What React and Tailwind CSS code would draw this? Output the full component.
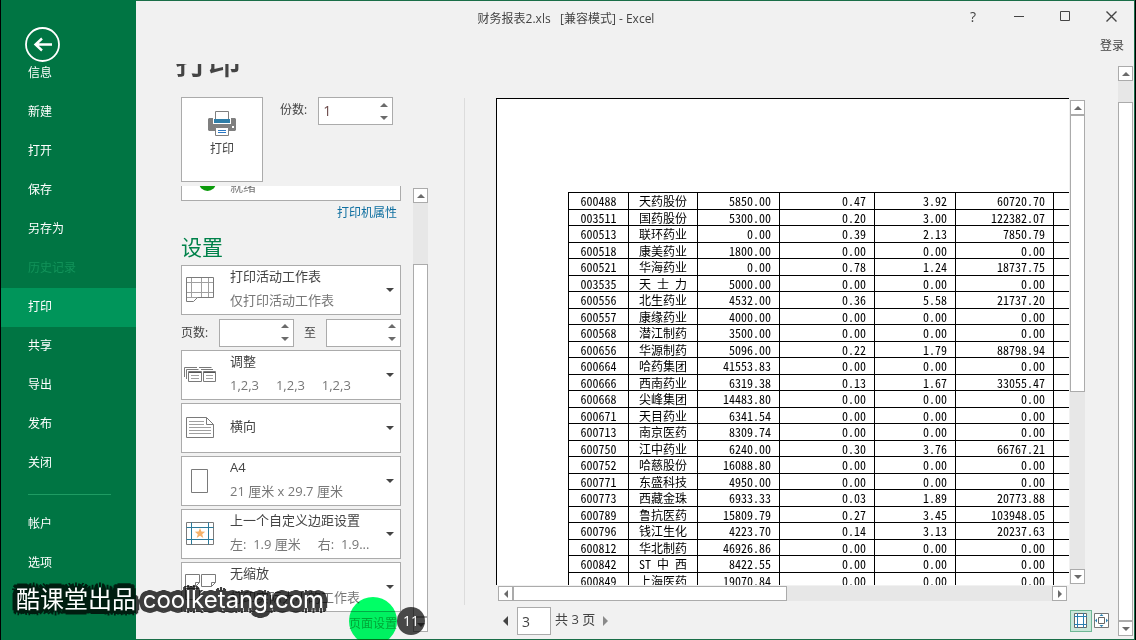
import React, { useState } from "react";
import clsx from "clsx";

const navItems = [
  { label: "信息" },
  { label: "新建" },
  { label: "打开" },
  { label: "保存" },
  { label: "另存为" },
  { label: "历史记录", disabled: true },
  { label: "打印" },
  { label: "共享" },
  { label: "导出" },
  { label: "发布" },
  { label: "关闭" }
];

const footerItems = [{ label: "帐户" }, { label: "选项" }];

const stocks = [
  ["600488", "天药股份", "5850.00", "0.47", "3.92", "60720.70"],
  ["003511", "国药股份", "5300.00", "0.20", "3.00", "122382.07"],
  ["600513", "联环药业", "0.00", "0.39", "2.13", "7850.79"],
  ["600518", "康美药业", "1800.00", "0.00", "0.00", "0.00"],
  ["600521", "华海药业", "0.00", "0.78", "1.24", "18737.75"],
  ["003535", "天 士 力", "5000.00", "0.00", "0.00", "0.00"],
  ["600556", "北生药业", "4532.00", "0.36", "5.58", "21737.20"],
  ["600557", "康缘药业", "4000.00", "0.00", "0.00", "0.00"],
  ["600568", "潜江制药", "3500.00", "0.00", "0.00", "0.00"],
  ["600656", "华源制药", "5096.00", "0.22", "1.79", "88798.94"],
  ["600664", "哈药集团", "41553.83", "0.00", "0.00", "0.00"],
  ["600666", "西南药业", "6319.38", "0.13", "1.67", "33055.47"],
  ["600668", "尖峰集团", "14483.80", "0.00", "0.00", "0.00"],
  ["600671", "天目药业", "6341.54", "0.00", "0.00", "0.00"],
  ["600713", "南京医药", "8309.74", "0.00", "0.00", "0.00"],
  ["600750", "江中药业", "6240.00", "0.30", "3.76", "66767.21"],
  ["600752", "哈慈股份", "16088.80", "0.00", "0.00", "0.00"],
  ["600771", "东盛科技", "4950.00", "0.00", "0.00", "0.00"],
  ["600773", "西藏金珠", "6933.33", "0.03", "1.89", "20773.88"],
  ["600789", "鲁抗医药", "15809.79", "0.27", "3.45", "103948.05"],
  ["600796", "钱江生化", "4223.70", "0.14", "3.13", "20237.63"],
  ["600812", "华北制药", "46926.86", "0.00", "0.00", "0.00"],
  ["600842", "ST 中 西", "8422.55", "0.00", "0.00", "0.00"],
  ["600849", "上海医药", "19070.84", "0.00", "0.00", "0.00"]
];

const arrowPoints = {
  up: "0,4 4,0 8,4",
  down: "0,0 8,0 4,4",
  left: "4,0 4,8 0,4",
  right: "0,0 4,4 0,8"
};

function Arrow({ dir, size, className = "fill-[#6b6b6b]" }) {
  const flat = dir === "up" || dir === "down";
  return (
    <svg
      viewBox={flat ? "0 0 8 4" : "0 0 4 8"}
      className={clsx("block shrink-0", size || (flat ? "w-2 h-1" : "w-1 h-2"), className)}
      aria-hidden="true"
    >
      <polygon points={arrowPoints[dir]} />
    </svg>
  );
}

function ScrollButton({ dir, label }) {
  return (
    <button
      type="button"
      aria-label={label}
      className="w-[15px] h-[15px] shrink-0 flex items-center justify-center bg-white border border-[#ababab]"
    >
      <Arrow dir={dir} />
    </button>
  );
}

// before / after are the empty track parts on each side of the thumb
function VScroll({ before, thumb, after }) {
  return (
    <div className="w-[15px] h-full flex flex-col bg-[#e7e7e7]">
      <ScrollButton dir="up" label="向上滚动" />
      <div className={before} />
      <div className={clsx("bg-white border border-[#ababab]", thumb)} />
      <div className={after} />
      <ScrollButton dir="down" label="向下滚动" />
    </div>
  );
}

function Spinner({ id, value = "" }) {
  const [text, setText] = useState(value);
  const step = (n) => setText(String(Math.max(1, (parseInt(text, 10) || 0) + n)));

  return (
    <div className="w-[75px] h-7 flex bg-white border border-[#ababab]">
      <input
        id={id}
        type="text"
        value={text}
        onChange={(e) => setText(e.target.value)}
        className="min-w-0 flex-1 pl-1 text-sm text-[#6b4a4a] bg-transparent focus:outline-none"
      />
      <div className="w-4 flex flex-col">
        <button type="button" aria-label="增加" onClick={() => step(1)} className="flex-1 flex items-center justify-center">
          <Arrow dir="up" />
        </button>
        <button type="button" aria-label="减少" onClick={() => step(-1)} className="flex-1 flex items-center justify-center">
          <Arrow dir="down" />
        </button>
      </div>
    </div>
  );
}

function Icon({ children }) {
  return (
    <svg width="36" height="28" viewBox="0 0 36 28" fill="none" stroke="#7a7a7a" className="shrink-0" aria-hidden="true">
      {children}
    </svg>
  );
}

const SheetIcon = () => (
  <Icon>
    <path stroke="#a0a0a0" d="M7.5 1.5v20M17.5 1.5v20M24.5 1.5v20M2.5 6.5h27M2.5 16.5h27M2.5 21.5h11" />
    <path d="M2.5 1.5h27v20h-16l-4 4h-7z" />
  </Icon>
);

const CollateIcon = () => (
  <Icon>
    <path d="M0.5 16V6.5h12.5M2.5 18V8.5h12M15 6.5h12.5M17 8.5h12" />
    <path d="M4.5 10.5h13v10h-13zM19.5 10.5h12v10h-12z" />
    <path stroke="#555" d="M5 11.5h12M20 11.5h11" />
    <path stroke="#a0a0a0" d="M7 14.5h8M7 17.5h8M22 14.5h7M22 17.5h7" />
  </Icon>
);

const LandscapeIcon = () => (
  <Icon>
    <path d="M2.5 3.5h20l7 7v13h-27zM22.5 3.5v7h7" />
    <path stroke="#a0a0a0" d="M5 7.5h15M5 10.5h15M5 13.5h22M5 16.5h22M5 19.5h22" />
  </Icon>
);

const PaperIcon = () => (
  <Icon>
    <path d="M7.5 2.5h16v23h-16z" />
  </Icon>
);

const MarginIcon = () => (
  <Icon>
    <path d="M2.5 2.5h27v22h-27z" />
    <path stroke="#2b7a9b" d="M7.5 2.5v22M24.5 2.5v22M2.5 7.5h27M2.5 19.5h27" />
    <path
      stroke="none"
      fill="#f6b26b"
      d="M16 8l1.4 3.6 3.8.2-3 2.4 1.1 3.8-3.3-2.2-3.3 2.2 1.1-3.8-3-2.4 3.8-.2z"
    />
  </Icon>
);

const ScaleIcon = () => (
  <Icon>
    <path d="M1.5 1.5h14v8l-4 4h-10zM11.5 13.5v-4h4" />
    <path d="M17.5 1.5h14v8l-4 4h-10zM27.5 13.5v-4h4" />
    <path d="M1.5 15.5h14v11h-14z" />
  </Icon>
);

const PrinterIcon = () => (
  <svg width="28" height="26" viewBox="0 0 28 26" aria-hidden="true" className="block">
    <path fill="#7f7f7f" d="M1 7h4v6h18V7h4l1 1v11l-1 1H1l-1-1V8z" />
    <path fill="#fff" stroke="#7f7f7f" d="M7.5 0.5h13v9h-13z" />
    <path fill="#2f7ea8" d="M6 8h16v4H6z" />
    <path fill="#fff" stroke="#7f7f7f" d="M7.5 16.5h13v8h-13z" />
    <path stroke="#2b78c4" d="M10 19.5h8M10 21.5h8" />
    <path fill="#fff" d="M24 15h2v2h-2z" />
  </svg>
);

const settings = [
  { title: "调整", detail: "1,2,3     1,2,3     1,2,3", icon: CollateIcon },
  { title: "横向", icon: LandscapeIcon },
  { title: "A4", detail: "21 厘米 x 29.7 厘米", icon: PaperIcon },
  { title: "上一个自定义边距设置", detail: "左:  1.9 厘米     右:  1.9...", icon: MarginIcon },
  { title: "无缩放", detail: "打印实际大小的工作表", icon: ScaleIcon }
];

function OptionBox({ title, detail, icon: OptionIcon }) {
  return (
    <button
      type="button"
      aria-haspopup="listbox"
      className="w-full h-[50px] flex items-center pl-0.5 pr-1.5 bg-white border border-[#ababab] text-left"
    >
      <OptionIcon />
      <span className="flex-1 min-w-0 pl-2.5 pb-1 text-[13px] leading-6 whitespace-pre">
        <span className="block text-[#444]">{title}</span>
        {detail && <span className="block text-[#777]">{detail}</span>}
      </span>
      <Arrow dir="down" className="fill-[#444]" />
    </button>
  );
}

function Sidebar() {
  const [active, setActive] = useState("打印");

  const renderItem = (item) => (
    <li key={item.label}>
      <button
        type="button"
        disabled={item.disabled}
        onClick={() => setActive(item.label)}
        className={clsx(
          "w-full h-[39px] pl-[27px] pb-0.5 text-left text-xs",
          item.disabled ? "text-[#12935a]" : "text-white",
          active === item.label && "bg-[#00955a]"
        )}
      >
        {item.label}
      </button>
    </li>
  );

  return (
    <nav className="w-[135px] shrink-0 pt-[27px] bg-[#007543]">
      <button type="button" aria-label="返回" className="relative z-10 block ml-6">
        <svg width="35" height="35" viewBox="0 0 35 35" fill="none" stroke="#fff" aria-hidden="true" className="block">
          <circle cx="17.5" cy="17.5" r="16.5" strokeWidth="1.8" />
          <path strokeWidth="2.4" d="M27 17.5H11M17 11.5l-6.5 6 6.5 6" />
        </svg>
      </button>
      <ul className="-mt-2">{navItems.map(renderItem)}</ul>
      <hr className="mt-[11px] mb-2.5 ml-[27px] mr-[25px] border-[#1f9c63]" />
      <ul>{footerItems.map(renderItem)}</ul>
    </nav>
  );
}

function TitleBar() {
  return (
    <header className="text-xs text-[#444]">
      <div className="h-9 flex">
        <h1 className="flex-1 pl-[46px] text-center leading-9 whitespace-pre">财务报表2.xls   [兼容模式] - Excel</h1>
        <div className="h-[31px] flex">
          <button type="button" aria-label="帮助" className="w-[46px] text-sm">?</button>
          <button type="button" aria-label="最小化" className="w-[46px] flex items-center justify-center">
            <svg width="11" height="11" stroke="#444" aria-hidden="true"><path d="M0 5.5h10" /></svg>
          </button>
          <button type="button" aria-label="最大化" className="w-[46px] flex items-center justify-center">
            <svg width="11" height="11" stroke="#444" fill="none" aria-hidden="true"><path d="M0.5 0.5h9v9h-9z" /></svg>
          </button>
          <button type="button" aria-label="关闭窗口" className="w-[46px] flex items-center justify-center">
            <svg width="11" height="11" stroke="#444" strokeWidth="1.4" aria-hidden="true"><path d="M0.5 0.5l10 10M10.5 0.5l-10 10" /></svg>
          </button>
        </div>
      </div>
      <div className="h-[27px] pr-2.5 flex items-start justify-end">
        <a href="#signin" className="leading-[18px]">登录</a>
      </div>
    </header>
  );
}

function PrintPanel() {
  return (
    <section className="w-[328px] shrink-0 flex flex-col text-[13px] text-[#444]">
      {/* page heading, scrolled partly out of view */}
      <div className="h-[33px] pl-[39px] overflow-hidden">
        <h2 className="-mt-5 text-[33px] leading-9 font-medium">打印</h2>
      </div>

      <div className="pl-[45px] flex items-start">
        <button type="button" className="w-[82px] h-[85px] flex flex-col items-center justify-start pt-[13px] bg-white border border-[#ababab] text-xs">
          <PrinterIcon />
          <span className="pt-1">打印</span>
        </button>
        <label htmlFor="copies" className="pl-[17px] pr-[11px] text-xs leading-[26px]">份数:</label>
        <Spinner id="copies" value="1" />
      </div>

      <div className="flex-1 min-h-0 mt-1 mb-[7px] pl-[45px] flex gap-3">
        <div className="w-[220px] h-full shrink-0 overflow-hidden">
          <div className="h-[15px] flex items-end pl-[17px] border border-t-0 border-[#ababab] bg-white overflow-hidden">
            <span className="w-[17px] h-[17px] mb-[9px] rounded-full bg-[#0b9a0b]" />
            <span className="pl-3.5 mb-1.5 leading-4 text-[#777]">就绪</span>
          </div>
          <p className="pr-1 pt-0.5 text-right text-xs leading-5">
            <a href="#printer" className="text-[#0f6fa0]">打印机属性</a>
          </p>
          <h3 className="pt-2 pb-0.5 text-[21px] leading-8 text-[#00824a]">设置</h3>
          <OptionBox title="打印活动工作表" detail="仅打印活动工作表" icon={SheetIcon} />
          <div className="h-[35px] flex items-center text-xs">
            <label htmlFor="from" className="w-[38px]">页数:</label>
            <Spinner id="from" />
            <label htmlFor="to" className="flex-1 text-center">至</label>
            <Spinner id="to" />
          </div>
          <div className="flex flex-col gap-[3px]">
            {settings.map((s) => (
              <OptionBox key={s.title} {...s} />
            ))}
          </div>
          <p className="pr-1 pt-0.5 text-right text-xs leading-5">
            <a href="#setup" className="text-[#5aa585]">页面设置</a>
          </p>
        </div>
        <div className="pt-0.5">
          <VScroll before="h-[61px]" thumb="flex-1" after="h-0" />
        </div>
      </div>
    </section>
  );
}

function PreviewTable() {
  return (
    <table className="w-[585px] table-fixed border-collapse text-xs leading-[14px] text-black font-['Noto_Sans_CJK_SC',monospace] [font-feature-settings:'hwid']">
      <colgroup>
        <col className="w-[60px]" />
        <col className="w-[69px]" />
        <col className="w-[82px]" />
        <col className="w-[95px]" />
        <col className="w-[81px]" />
        <col className="w-[98px]" />
        <col />
      </colgroup>
      <tbody>
        {stocks.map((row) => (
          <tr key={row[0]} className="odd:h-[17px] even:h-4">
            {row.map((cell, i) => (
              <td
                key={i}
                className={clsx(
                  "py-0 border border-black whitespace-pre",
                  i < 2 ? "px-0 text-center" : "pl-0 pr-2 text-right"
                )}
              >
                {cell}
              </td>
            ))}
            <td className="p-0 border border-black" />
          </tr>
        ))}
      </tbody>
    </table>
  );
}

function PreviewFooter() {
  const [page, setPage] = useState("3");

  return (
    <div className="h-7 mt-1.5 mb-1 pl-[7px] flex items-center text-[13px] text-[#444]">
      <button type="button" aria-label="上一页">
        <Arrow dir="left" size="w-[5px] h-2.5" className="fill-[#444]" />
      </button>
      <input
        type="text"
        aria-label="当前页"
        value={page}
        onChange={(e) => setPage(e.target.value)}
        className="w-[34px] h-7 ml-[9px] pl-1 bg-white border border-[#ababab] text-sm focus:outline-none"
      />
      <span className="px-1 pb-0.5">共 3 页</span>
      <button type="button" aria-label="下一页" className="pl-1">
        <Arrow dir="right" size="w-[5px] h-2.5" className="fill-[#8a8a8a]" />
      </button>
      <div className="ml-auto flex items-center gap-0.5">
        <button type="button" aria-label="显示边距" className="w-[22px] h-[22px] flex items-center justify-center bg-[#c9e6d9] border border-[#6fb795]">
          <svg width="16" height="16" fill="none" aria-hidden="true">
            <path fill="#fff" stroke="#666" d="M1.5 0.5h12v14h-12z" />
            <path stroke="#2b7fb0" d="M4.5 0v15M10.5 0v15M1 3.5h13M1 11.5h13" />
          </svg>
        </button>
        <button type="button" aria-label="缩放到页面">
          <svg width="16" height="16" fill="none" aria-hidden="true" className="block">
            <path fill="#fff" stroke="#777" d="M0.5 0.5h14v14h-14z" />
            <path stroke="#666" d="M4.5 4.5h6v6h-6z" />
            <path fill="#2b7fb0" d="M7.5 1l2 2h-4zM7.5 14l2-2h-4zM1 7.5l2-2v4zM14 7.5l-2-2v4z" />
          </svg>
        </button>
      </div>
    </div>
  );
}

function Preview() {
  return (
    <section className="flex-1 min-w-0 flex flex-col pl-[31px] pr-2 pt-[34px]">
      <div className="flex-1 min-h-0 flex pr-[25px]">
        <div className="flex-1 min-w-0 pl-[71px] pt-[93px] bg-white border-t border-l border-black overflow-hidden">
          <PreviewTable />
        </div>
        <div className="pl-px pt-0.5 pb-px">
          <VScroll before="h-0" thumb="h-[277px]" after="flex-1" />
        </div>
      </div>
      <div className="mt-px pl-0.5 pr-[43px]">
        <div className="flex bg-[#e7e7e7]">
          <ScrollButton dir="left" label="向左滚动" />
          <div className="w-[274px] bg-white border border-[#ababab]" />
          <div className="flex-1" />
          <ScrollButton dir="right" label="向右滚动" />
        </div>
      </div>
      <PreviewFooter />
    </section>
  );
}

// the dark halo sits in a pseudo element so that it can be faded as one layer
function Watermark({ text }) {
  return (
    <p
      data-text={text}
      className="absolute isolate left-[15px] bottom-[22px] text-2xl leading-9 text-white whitespace-pre font-['Inter','Noto_Sans_CJK_SC',sans-serif] before:content-[attr(data-text)] before:absolute before:inset-0 before:-z-10 before:opacity-75 before:text-black before:[text-shadow:5px_0_#000,-5px_0_#000,0_5px_#000,0_-5px_#000,4px_3px_#000,-4px_3px_#000,4px_-3px_#000,-4px_-3px_#000,3px_4px_#000,-3px_4px_#000,3px_-4px_#000,-3px_-4px_#000,2px_0_1px_#000,-2px_0_1px_#000,0_2px_1px_#000,0_-2px_1px_#000,3px_2px_#000,-3px_2px_#000,3px_-2px_#000,-3px_-2px_#000]"
    >
      {text}
    </p>
  );
}

export default function App() {
  return (
    <div className="relative h-screen flex overflow-hidden bg-[#f1f1f1] border-x border-black font-['Open_Sans','Noto_Sans_CJK_SC',sans-serif]">
      <Sidebar />
      <main className="flex-1 min-w-0 flex flex-col border-t border-r border-b border-[#1a6e48]">
        <TitleBar />
        <div className="flex-1 min-h-0 flex">
          <PrintPanel />
          <div className="w-px mt-[34px] mb-[34px] bg-[#dcdcdc]" />
          <Preview />
          <div className="pt-0.5 pb-[3px] pr-px">
            <VScroll before="h-[21px]" thumb="flex-1" after="h-0" />
          </div>
        </div>
      </main>

      {/* click highlight and step number */}
      <div className="absolute left-[348px] -bottom-[5px] w-12 h-12 rounded-full bg-[#00ff66] mix-blend-multiply" />
      <div className="absolute left-[396px] bottom-[5px] w-7 h-7 rounded-full bg-black/70 flex items-center justify-center text-sm text-white">
        11
      </div>

      <Watermark text="酷课堂出品 coolketang.com" />
    </div>
  );
}
